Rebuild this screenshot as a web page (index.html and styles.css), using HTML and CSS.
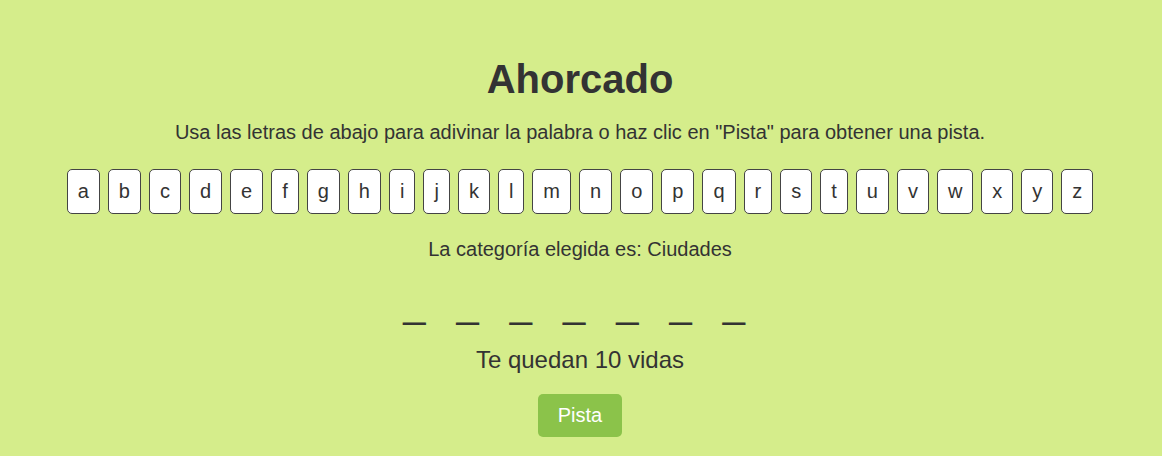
FILE: index.html
```html
<!DOCTYPE html>
<html lang="es">
<head>
<meta charset="utf-8">
<title>Ahorcado</title>
<link rel="stylesheet" href="styles.css">
</head>
<body>
<main class="game">
  <h1 class="title">Ahorcado</h1>
  <p class="intro">Usa las letras de abajo para adivinar la palabra o haz clic en "Pista" para obtener una pista.</p>
  <div class="letters">
    <button class="letter">a</button><button class="letter">b</button><button class="letter">c</button><button class="letter">d</button><button class="letter">e</button><button class="letter">f</button><button class="letter">g</button><button class="letter">h</button><button class="letter">i</button><button class="letter">j</button><button class="letter">k</button><button class="letter">l</button><button class="letter">m</button><button class="letter">n</button><button class="letter">o</button><button class="letter">p</button><button class="letter">q</button><button class="letter">r</button><button class="letter">s</button><button class="letter">t</button><button class="letter">u</button><button class="letter">v</button><button class="letter">w</button><button class="letter">x</button><button class="letter">y</button><button class="letter">z</button>
  </div>
  <p class="category">La categoría elegida es: Ciudades</p>
  <div class="word">
    <span class="slot">_</span><span class="slot">_</span><span class="slot">_</span><span class="slot">_</span><span class="slot">_</span><span class="slot">_</span><span class="slot">_</span>
  </div>
  <p class="lives">Te quedan 10 vidas</p>
  <button class="hint">Pista</button>
</main>
</body>
</html>
```

FILE: styles.css
```css
html, body {
  margin: 0;
  padding: 0;
}

body {
  background: #d5ed8b;
  color: #333;
  font-family: "Liberation Sans", Arial, sans-serif;
}

.game {
  display: flex;
  flex-direction: column;
  align-items: center;
  text-align: center;
  padding: 56px 2px 0 0;
}

.title {
  margin: 0;
  font-size: 40px;
  font-weight: bold;
  line-height: 46px;
}

.intro {
  margin: 19px 0 0;
  font-size: 20px;
  line-height: 23px;
}

.letters {
  margin-top: 25px;
  display: flex;
  justify-content: center;
  gap: 8px;
}

.letter {
  font-family: "Liberation Sans", Arial, sans-serif;
  font-size: 20px;
  line-height: 23px;
  padding: 10px;
  background: #fff;
  color: #333;
  border: 1px solid #444;
  border-radius: 5px;
}

.category {
  margin: 24px 0 0;
  font-size: 20px;
  line-height: 23px;
}

.word {
  margin-top: 19px;
  display: flex;
  gap: 31px;
  padding-right: 12px;
  font-size: 40px;
  line-height: 46px;
}

.lives {
  margin: 20px 0 0;
  font-size: 24px;
  line-height: 28px;
}

.hint {
  margin-top: 20px;
  font-family: "Liberation Sans", Arial, sans-serif;
  font-size: 20px;
  line-height: 23px;
  padding: 10px 20px;
  background: #8bc34a;
  color: #fff;
  border: none;
  border-radius: 5px;
}
```
